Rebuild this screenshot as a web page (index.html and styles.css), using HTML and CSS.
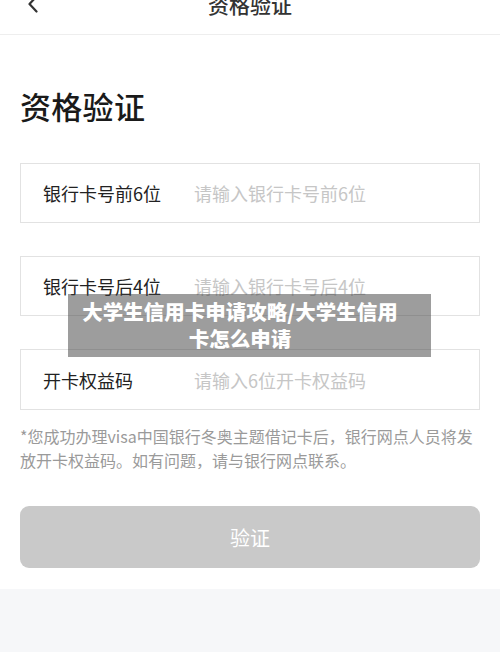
FILE: index.html
```html
<!DOCTYPE html>
<html lang="zh-CN">
<head>
<meta charset="utf-8">
<title>资格验证</title>
<link rel="stylesheet" href="styles.css">
</head>
<body>
<div class="page">
  <header class="nav">
    <span class="back">
      <svg width="12" height="18" viewBox="0 0 12 18"><path d="M9.5 1.5 L2.5 9 L9.5 16.5" fill="none" stroke="#333" stroke-width="2.2" stroke-linecap="round" stroke-linejoin="round"/></svg>
    </span>
    <span class="nav-title">资格验证</span>
  </header>
  <main class="content">
    <h1 class="title">资格验证</h1>
    <div class="field">
      <span class="label">银行卡号前6位</span>
      <span class="placeholder">请输入银行卡号前6位</span>
    </div>
    <div class="field">
      <span class="label">银行卡号后4位</span>
      <span class="placeholder">请输入银行卡号后4位</span>
    </div>
    <div class="field">
      <span class="label">开卡权益码</span>
      <span class="placeholder">请输入6位开卡权益码</span>
    </div>
    <p class="note">*您成功办理visa中国银行冬奥主题借记卡后，银行网点人员将发放开卡权益码。如有问题，请与银行网点联系。</p>
    <button class="submit">验证</button>
  </main>
  <div class="footer"></div>
  <div class="banner">大学生信用卡申请攻略/大学生信用<br>卡怎么申请</div>
</div>
</body>
</html>
```
FILE: styles.css
```css
* { box-sizing: border-box; }
html, body { margin: 0; padding: 0; background: #fff; }
body {
  font-family: "Noto Sans CJK SC", "Noto Sans", sans-serif;
  width: 500px;
  height: 652px;
  overflow: hidden;
}
.page { position: relative; display: flow-root; }
.nav {
  height: 61px;
  margin-top: -26px;
  border-bottom: 1px solid #eeeeee;
  display: flex;
  align-items: center;
  justify-content: center;
  position: relative;
}
.back {
  position: absolute;
  left: 27px;
  top: 21px;
  width: 12px;
  height: 18px;
  display: flex;
}
.nav-title {
  font-size: 21px;
  font-weight: 500;
  color: #333;
  margin-bottom: 1px;
}
.content { padding: 0 20px; }
.title {
  margin: 51px 0 37px;
  font-size: 31px;
  line-height: 40px;
  font-weight: 500;
  color: #1a1a1a;
  letter-spacing: 0.3px;
}
.field {
  height: 60px;
  border: 1px solid #e2e2e2;
  display: flex;
  align-items: center;
  padding-left: 22px;
  margin-bottom: 33px;
}
.field:last-of-type { margin-bottom: 0; height: 61px; }
.label {
  width: 151px;
  font-size: 18px;
  color: #222;
  flex: none;
}
.placeholder {
  font-size: 18px;
  color: #c6c6c6;
}
.note {
  margin: 14px 0 0;
  font-size: 16px;
  line-height: 24px;
  color: #9a9a9a;
}
.submit {
  display: block;
  width: 460px;
  height: 62px;
  margin: 34px 0 0;
  border: none;
  border-radius: 9px;
  background: #c9c9c9;
  color: #fff;
  font-family: inherit;
  font-size: 20px;
}
.footer {
  margin-top: 21px;
  height: 63px;
  background: #f6f7f9;
}
.banner {
  position: absolute;
  left: 68px;
  top: 294px;
  width: 363px;
  height: 63px;
  padding: 4px 19px 0 0;
  background: rgba(60, 60, 60, 0.5);
  color: #fff;
  font-size: 20.5px;
  font-weight: 900;
  line-height: 27px;
  text-align: center;
  white-space: nowrap;
}
```
